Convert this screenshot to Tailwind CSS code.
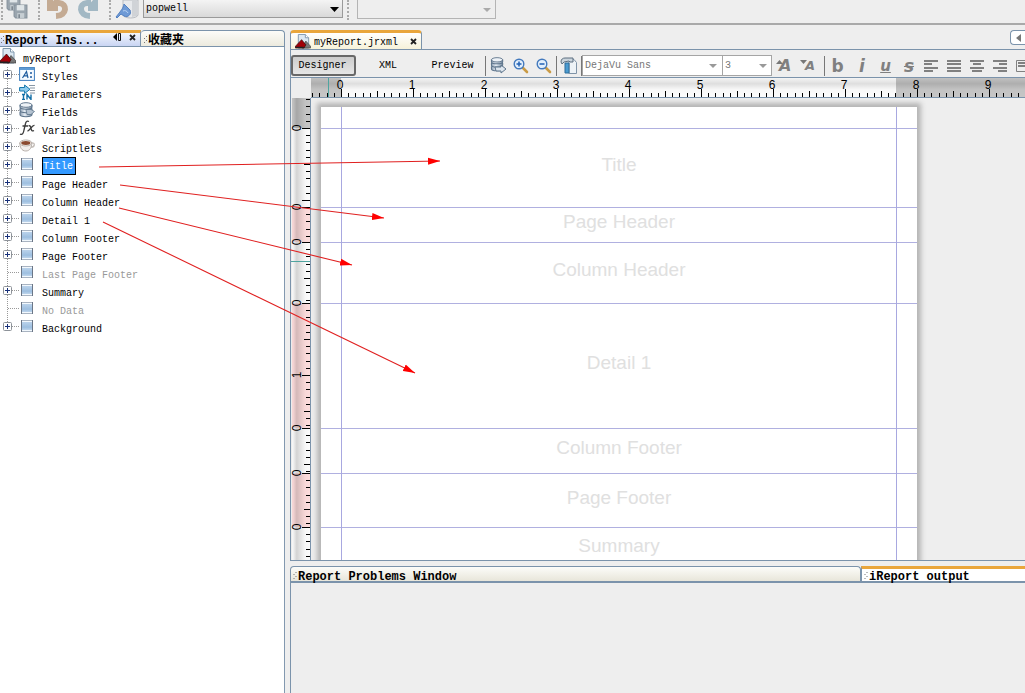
<!DOCTYPE html>
<html lang="en">
<head>
<meta charset="utf-8">
<title>iReport Designer</title>
<script src="https://cdn.jsdelivr.net/npm/@tailwindcss/browser@4"></script>
</head>
<body class="relative flex h-screen flex-col overflow-hidden bg-[#eeeeee] font-['Liberation_Mono','Noto_Sans_CJK_SC',monospace] text-[10px] leading-[18px] text-black">

<svg width="0" height="0" class="absolute" aria-hidden="true">
  <defs>
    <linearGradient id="blue" x1="0" y1="0" x2="0" y2="1"><stop offset="0" stop-color="#c6daef"/><stop offset=".6" stop-color="#9dbfe0"/><stop offset="1" stop-color="#d5e4f4"/></linearGradient>
    <linearGradient id="steel" x1="0" y1="0" x2="1" y2="0"><stop offset="0" stop-color="#8b9db1"/><stop offset=".4" stop-color="#e6edf4"/><stop offset="1" stop-color="#7389a0"/></linearGradient>
    <linearGradient id="rulerH" x1="0" y1="0" x2="0" y2="1"><stop offset="0" stop-color="#000" stop-opacity=".03"/><stop offset=".3" stop-color="#000" stop-opacity=".12"/><stop offset=".6" stop-color="#000" stop-opacity=".02"/><stop offset="1" stop-color="#000" stop-opacity="0"/></linearGradient>
    <marker id="head" markerUnits="userSpaceOnUse" markerWidth="13" markerHeight="8" refX="12" refY="4" orient="auto"><path d="M0 0.5 12 4 0 7.5z" fill="#f00"/></marker>
    <symbol id="doc" viewBox="0 0 16 16"><path d="M3 .5h7.500L14 4v11H3z" fill="#dce8f2" stroke="#8098ae"/><path d="M10.500.5V4H14" fill="#fff" stroke="#8098ae"/><path d="M7 15 11 7.500 16 13v2z" fill="#777" stroke="#333" stroke-width=".6"/><path d="M0 13 6.500 6 11 11.500 9 15H0z" fill="#a00008" stroke="#300" stroke-width=".7"/><path d="M0 13.500h8l2 1.500H0z" fill="#222"/></symbol>
    <symbol id="band" viewBox="0 0 16 16"><path d="M2 2h12v12H2z" fill="url(#blue)"/><path d="M3 3.500h10M3 12.500h10" stroke="#f2f8fd"/><path d="M3 2.500h10M3 13.500h10" stroke="#a9b4c2"/><path d="M2.500 2v12M13.500 2v12" stroke="#6b7686"/></symbol>
    <symbol id="plus" viewBox="0 0 9 9"><rect x=".5" y=".5" width="8" height="8" rx="1" fill="#fff" stroke="#8d9299"/><path d="M2 4.500h5M4.500 2v5" stroke="#17307a"/></symbol>
    <symbol id="db" viewBox="0 0 16 16"><path d="M1 3v9.500c0 3 12 3 12 0V3z" fill="url(#steel)"/><ellipse cx="7" cy="3" rx="6" ry="2.300" fill="#edf2f7" stroke="#63788e"/><path d="M1 3v2c0 3 12 3 12 0V3M1 6.500v2c0 3 12 3 12 0v-2M1 10v2.500c0 3 12 3 12 0V10" fill="none" stroke="#5d748b" stroke-width="1.100"/></symbol>
    <symbol id="fields" viewBox="0 0 16 16"><use href="#db" width="16" height="16"/><path d="M7 7.500h5l3.500 2-3.500 3H8z" fill="#b4c2d0" stroke="#60768c" stroke-width=".8"/></symbol>
    <symbol id="styles" viewBox="0 0 16 14"><rect x=".6" y=".6" width="14.800" height="12.800" fill="#f5faff" stroke="#3d7dbd"/><path d="M1 2h14" stroke="#5f9bd4" stroke-width="2"/><path d="M3.500 11 7.500 4.500 9 11M4.800 8.800h3.800" fill="none" stroke="#1c5a9e" stroke-width="1.200"/><path d="M11 6h2M11 10h2" stroke="#1c5a9e" stroke-width="1.500"/></symbol>
    <symbol id="params" viewBox="0 0 16 16"><path d="M10 1.500h6M11 4h5M11 6.500h5M11 9h5" stroke="#8997a5"/><path d="M.6 3.500h5V1L11 5.300 5.600 9.500V7h-5z" fill="#8ecbed" stroke="#1678ad"/><path d="M4.500 10.500v5M3 10.500h3M3 15.500h3M8 15.500v-5l4 5v-5" fill="none" stroke="#1370a8" stroke-width="1.400"/></symbol>
    <symbol id="fx" viewBox="0 0 16 16"><path d="M1 14c2.500 1.500 3.500-1 4-4L6.500 3.500C7 1 8.500.8 10 1.500M3.500 6H9M9.500 6c2-1 2 1 2.500 2.500.7 2.500 1 3 3 2M15.500 5.500c-2-1-5 5.500-7 5.500" fill="none" stroke="#3c3c3c" stroke-width="1.300"/></symbol>
    <symbol id="cup" viewBox="0 0 16 14"><path d="M12 4c5-1 4 5-1 4" fill="none" stroke="#c3bcb7" stroke-width="1.300"/><path d="M.8 4c0 4 1.700 8 6 8s6-4 6-8z" fill="#f2efed" stroke="#b7afa9"/><ellipse cx="6.800" cy="4" rx="6" ry="3" fill="#f8f5f2" stroke="#b7afa9"/><ellipse cx="6.800" cy="4" rx="4.600" ry="1.900" fill="#8a4a30"/></symbol>
    <symbol id="floppy" viewBox="0 0 14 14"><path d="M1 1h12v12H2.500L1 11.500z" fill="#9aa5ae" stroke="#86929c"/><path d="M3.500 1h7v5h-7z" fill="#dfe5e8"/><path d="M4 8.500h6.500V13H4z" fill="#c6ced3"/><path d="M5 9.500h1.500V13H5z" fill="#7b868f"/></symbol>
    <symbol id="lens" viewBox="0 0 16 16"><path d="m9.500 9.500 4.500 4.500" stroke="#c99b46" stroke-width="2.600" stroke-linecap="round"/><circle cx="6" cy="6" r="4.800" fill="#e2effc" stroke="#4379bd" stroke-width="1.400"/></symbol>
    <symbol id="grip" viewBox="0 0 4 8"><path d="M2 0h1v1H2zM0 2h1v1H0zM2 4h1v1H2zM0 6h1v1H0z" fill="#777"/></symbol>
  </defs>
</svg>

<!-- Main toolbar -->
<header class="flex h-[25px] shrink-0 items-start border-b-2 border-[#a9a9a9] pl-px">
  <i class="h-5 border-l-2 border-dotted border-[#aaa]"></i>
  <button class="ml-[3px]" aria-label="Save all"><svg width="23" height="20"><use href="#floppy" x="0" y="-4" width="15" height="15"/><use href="#floppy" x="7" y="4" width="15" height="15"/></svg></button>
  <i class="ml-[9px] h-5 border-l-2 border-dotted border-[#aaa]"></i>
  <button class="ml-[6px]" aria-label="Undo"><svg width="23" height="20" viewBox="0 0 23 20"><path d="M8 3h5c8.500.5 8.500 12.500-3 13" fill="none" stroke="#c4ab94" stroke-width="6"/><path d="M1 0h6l5 6v5H1z" fill="#c4ab94"/></svg></button>
  <button class="ml-[8px]" aria-label="Redo"><svg width="22" height="20" viewBox="0 0 22 20"><path d="M14 3h-4c-8.500.5-8.500 12.500 3 13" fill="none" stroke="#a2b8c4" stroke-width="6"/><path d="M21 0h-5l-5 6v5h10z" fill="#a2b8c4"/></svg></button>
  <i class="ml-[10px] h-5 border-l-2 border-dotted border-[#aaa]"></i>
  <button class="ml-[4px]" aria-label="Data sources"><svg width="25" height="20" viewBox="0 0 25 20"><path d="M8 0v15c1 4 14 4 15 0V0z" fill="#e7e9ec" stroke="#babdc2"/><path d="M17 0h5v16l-5 1z" fill="#d0d3d7"/><path d="M9 4 15 10c2 4-2 8-6 6l-3-2-4 4-1-1 4-5c1-2 3-3 4-8z" fill="#6e9ad6" stroke="#5380c0"/><path d="M8 11c2-1 4 0 5 2" stroke="#b9d3f3" fill="none"/></svg></button>
  <label class="relative ml-[3px] block w-[200px]">
    <select aria-label="Data source" class="block h-[18px] w-full appearance-none border border-t-0 border-[#9a9a9a] bg-linear-to-b from-[#f4f4f4] to-[#d9d9d9] pl-[2px] leading-[17px]"><option>popwell</option></select>
    <svg class="pointer-events-none absolute right-1 top-[7px]" width="9" height="5"><path d="M0 0h9L4.500 5z"/></svg>
  </label>
  <i class="ml-[4px] h-5 border-l-2 border-dotted border-[#aaa]"></i>
  <label class="relative ml-[8px] block w-[139px]">
    <select aria-label="Location" disabled class="block h-[19px] w-full appearance-none border border-t-0 border-[#b4b4b4] bg-[#eeeeee]"><option></option></select>
    <svg class="pointer-events-none absolute right-[5px] top-[8px]" width="8" height="4"><path d="M0 0h8L4 4z" fill="#aaa"/></svg>
  </label>
</header>

<div class="flex min-h-0 flex-1 pt-[5px]">
  <!-- Report inspector -->
  <aside class="flex w-[285px] shrink-0 flex-col">
    <div class="flex h-[17px] border-b border-[#7b93ab]">
      <div class="flex w-[141px] border-r border-t-[3px] border-r-[#7b93ab] border-t-[#e9a63c] bg-linear-to-b from-[#f2f5fc] to-[#c9d5f3] pl-px">
        <svg width="4" height="8" class="mt-[3px]"><use href="#grip"/></svg>
        <span class="flex-1 whitespace-nowrap text-[12px] leading-[16px] font-bold">Report Ins...</span>
        <button class="flex h-3" aria-label="Minimize"><svg width="9" height="9"><path d="M4 0v8L0 4z"/><path d="M5.500.5h2v7h-2z" fill="none" stroke="#111"/></svg></button>
        <button class="mr-[4px] ml-[7px] mt-px flex h-3" aria-label="Close"><svg width="7" height="7"><path d="m1 1 5 5M6 1 1 6" stroke="#222" stroke-width="1.800"/></svg></button>
      </div>
      <div class="flex flex-1 rounded-t-sm border-t border-r border-[#7b93ab] bg-linear-to-b from-[#fcfcf9] to-[#eceade] pl-[3px] text-[12px] leading-[20px] font-bold"><svg width="4" height="8" class="mt-[5px]"><use href="#grip"/></svg>收藏夹</div>
    </div>
    <nav class="flex-1 border-r border-[#8399b0] bg-white pt-[2px]">
      <div class="flex h-[18px] items-center"><svg width="16" height="16" class="mb-[5px]"><use href="#doc"/></svg><span class="ml-[7px] pt-[3px]">myReport</span></div>
      <ul id="tree"></ul>
    </nav>
  </aside>

  <main class="ml-[5px] flex min-w-0 flex-1 flex-col">
    <!-- Editor tabs -->
    <div class="flex h-[20px] shrink-0 items-stretch justify-between border-b border-[#7b93ab]">
      <div class="flex w-[132px] items-center rounded-t-sm border-x border-t-[3px] border-x-[#7b93ab] border-t-[#e9a63c] bg-linear-to-b from-white to-[#f6f2d9] pl-[4px]">
        <svg width="16" height="15"><use href="#doc"/></svg><span class="ml-[3px] flex-1 pt-[4px]">myReport.jrxml</span>
        <button aria-label="Close tab" class="mr-[4px]"><svg width="7" height="7"><path d="m1 1 5 5M6 1 1 6" stroke="#222" stroke-width="1.800"/></svg></button>
      </div>
      <button aria-label="Scroll left" class="flex h-[15px] w-[15px] items-center justify-center rounded-l-sm border border-r-0 border-[#7b93ab] bg-white"><svg width="5" height="8"><path d="M5 0v8L0 4z" fill="#777"/></svg></button>
    </div>

    <div class="flex min-h-0 flex-1 flex-col border-l border-b border-[#7b93ab]">
      <!-- Designer toolbar -->
      <div class="flex h-[28px] shrink-0 items-center overflow-hidden whitespace-nowrap border-b border-[#7b93ab] pt-[4px]">
        <button class="h-[21px] w-[65px] shrink-0 rounded-[3px] border-2 border-[#686868] bg-linear-to-b from-[#ccc] to-[#e6e6e6] pt-px pr-[2px] leading-[16px]">Designer</button>
        <button class="w-[64px] shrink-0 pt-px">XML</button>
        <button class="w-[65px] shrink-0 pt-px">Preview</button>
        <i class="h-5 border-l border-[#777]"></i>
        <button class="ml-[4px] shrink-0" aria-label="Query"><svg width="17" height="17"><use href="#db" width="16" height="15"/><path d="M5 10h6V8l5 4-5 4v-2H6z" fill="#dde5ed" stroke="#5d748b"/></svg></button>
        <button class="ml-[6px] shrink-0" aria-label="Zoom in"><svg width="16" height="16"><use href="#lens"/><path d="M3.500 6h5M6 3.500v5" stroke="#2161b5" stroke-width="1.500"/></svg></button>
        <button class="ml-[7px] shrink-0" aria-label="Zoom out"><svg width="16" height="16"><use href="#lens"/><path d="M3.500 6h5" stroke="#2161b5" stroke-width="1.500"/></svg></button>
        <i class="ml-[4px] h-5 border-l border-[#777]"></i>
        <button class="ml-[3px] shrink-0" aria-label="Format tools"><svg width="17" height="17"><path d="M9 2.500h5l2.500 3v11H9z" fill="#eef3f7" stroke="#8094a8"/><path d="M1 5c0-3 2-4 4-4h8v4h-3L9 4 4 5 2 7z" fill="#cbd5dd" stroke="#5c6f80"/><path d="M5 6h4v10H5z" fill="#4b9bd0" stroke="#2c6d9b"/></svg></button>
        <i class="ml-[4px] h-5 border-l border-[#777]"></i>
        <label class="relative block w-[141px] shrink-0">
          <select aria-label="Font" disabled class="block h-[21px] w-full appearance-none border border-[#a5a5a5] bg-white pl-[2px] text-[#777] opacity-100"><option>DejaVu Sans</option></select>
          <svg class="pointer-events-none absolute right-[6px] top-[9px]" width="8" height="4"><path d="M0 0h8L4 4z" fill="#999"/></svg>
        </label>
        <label class="relative block w-[49px] shrink-0">
          <select aria-label="Font size" disabled class="block h-[21px] w-full appearance-none border border-l-0 border-[#a5a5a5] bg-white pl-[2px] text-[#777] opacity-100"><option>3</option></select>
          <svg class="pointer-events-none absolute right-[5px] top-[9px]" width="8" height="4"><path d="M0 0h8L4 4z" fill="#999"/></svg>
        </label>
        <div class="ml-[4px] flex shrink-0 items-center font-['DejaVu_Sans',sans-serif] font-bold text-[#808080] text-shadow-[1px_1px_1px_#aaa]">
          <button class="relative w-[24px] pl-[3px] text-left text-[16px] italic" aria-label="Increase font">A<svg class="absolute left-0 top-[3px]" width="7" height="4"><path d="M0 4h7L3.500 0z" fill="#777"/></svg></button>
          <button class="relative w-[24px] pl-[5px] text-left text-[13px] italic" aria-label="Decrease font">A<svg class="absolute left-0 top-[3px]" width="7" height="4"><path d="M0 0h7L3.500 4z" fill="#777"/></svg></button>
          <i class="h-5 border-l border-[#777]"></i>
          <button class="w-[25px] text-[17px]">b</button>
          <button class="w-[24px] text-[17px] italic">i</button>
          <button class="w-[23px] text-[15px] italic underline">u</button>
          <button class="w-[24px] text-[17px] italic line-through">s</button>
        </div>
        <div class="ml-[2px] flex shrink-0 gap-[7px] text-[#808080]">
          <button aria-label="Align left"><svg width="16" height="14" stroke="currentColor" stroke-width="2"><path d="M1 2h14M1 5h8M1 9h14M1 12h9"/></svg></button>
          <button aria-label="Justify"><svg width="16" height="14" stroke="currentColor" stroke-width="2"><path d="M1 2h14M1 5h14M1 9h14M1 12h14"/></svg></button>
          <button aria-label="Align center"><svg width="16" height="14" stroke="currentColor" stroke-width="2"><path d="M1 2h14M4 5h8M1 9h14M3 12h10"/></svg></button>
          <button aria-label="Align right"><svg width="16" height="14" stroke="currentColor" stroke-width="2"><path d="M1 2h14M7 5h8M1 9h14M6 12h9"/></svg></button>
          <button aria-label="Align top"><svg width="16" height="14" stroke="currentColor"><path d="M1.500 1.500h14v11h-14z" fill="none"/><path d="M3 4h12M3 7h12" stroke-width="2"/></svg></button>
        </div>
      </div>

      <!-- Horizontal ruler -->
      <div class="ml-[20px] h-[20px] shrink-0 overflow-hidden border-b border-[#7b93ab]">
        <svg id="ruler-x" width="100%" height="19" class="font-['Liberation_Sans',sans-serif] text-[12px]">
          <rect width="100%" height="19" fill="#c6c6c6"/><rect x="30" width="555" height="19" fill="#fcfcfc"/><rect width="100%" height="19" fill="url(#rulerH)"/><path d="M17.500 0v19" stroke="#4fa5a0"/>
        </svg>
      </div>

      <div class="flex min-h-0 flex-1 overflow-hidden">
        <!-- Vertical ruler -->
        <div class="w-[20px] shrink-0 border-r border-[#7b93ab]">
          <svg id="ruler-y" width="19" height="463" class="font-['Liberation_Sans',sans-serif] text-[12px]">
            <defs><linearGradient id="rulerV"><stop offset="0" stop-color="#000" stop-opacity="0"/><stop offset=".12" stop-color="#000" stop-opacity=".04"/><stop offset=".3" stop-color="#000" stop-opacity=".16"/><stop offset=".75" stop-color="#000" stop-opacity=".02"/><stop offset="1" stop-color="#000" stop-opacity="0"/></linearGradient></defs>
          </svg>
        </div>
        <!-- Report page -->
        <div class="pt-[9px] pl-[10px]">
          <div id="page" class="relative flex w-[596px] flex-col bg-white text-center font-['Liberation_Sans',sans-serif] text-[19px] text-[#e0e0e0] shadow-[0_0_5px_4px_#b4b4b4]"></div>
        </div>
      </div>
    </div>

    <!-- Output windows -->
    <section class="mt-[5px] flex h-[127px] shrink-0 flex-col">
      <div class="flex h-[17px] shrink-0 border-b-2 border-[#7b93ab] text-[12px] font-bold whitespace-nowrap">
        <div class="flex h-[15px] w-[571px] rounded-t-sm border border-b-0 border-[#7b93ab] bg-linear-to-b from-[#fcfcf9] to-[#e8e6da] pl-[2px] leading-[21px]"><svg width="5" height="8" class="mt-[5px]"><use href="#grip"/></svg>Report Problems Window</div>
        <div class="flex h-[15px] flex-1 border-t-[3px] border-l border-t-[#e9a63c] border-l-[#7b93ab] bg-white pl-[2px] leading-[17px]"><svg width="5" height="8" class="mt-[3px]"><use href="#grip"/></svg>iReport output</div>
      </div>
      <div class="flex-1 border-l border-[#7b93ab]"></div>
    </section>
  </main>
</div>

<!-- Annotation arrows -->
<svg class="pointer-events-none absolute left-0 top-0" width="460" height="400" stroke="#e02020" stroke-width="1.100" aria-hidden="true">
  <path d="M99 167 440 161" marker-end="url(#head)"/><path d="M120 185 384 218" marker-end="url(#head)"/><path d="M119 208 352 265" marker-end="url(#head)"/><path d="M103 222 415 373" marker-end="url(#head)"/>
</svg>

<script>
  // [label, icon, expandable]
  const nodes = [['Styles','styles',1],['Parameters','params',1],['Fields','fields',1],['Variables','fx',1],['Scriptlets','cup',1],['Title','band',1],['Page Header','band',1],['Column Header','band',1],['Detail 1','band',1],['Column Footer','band',1],['Page Footer','band',1],['Last Page Footer','band',0],['Summary','band',1],['No Data','band',0],['Background','band',1]];
  document.getElementById('tree').innerHTML = nodes.map(([t, icon, open], i) => `
    <li class="flex h-[18px] items-center">
      <svg width="19" height="18" class="shrink-0"><path d="M7.500 0V${i === nodes.length - 1 ? 7 : 18}M8 7.500h11" stroke="#999" stroke-dasharray="1 1"/>${open ? '<use href="#plus" x="3" y="3" width="9" height="9"/>' : ''}</svg>
      <svg width="16" height="16" class="mb-[4px] shrink-0"><use href="#${icon}"/></svg>
      <span class="${t === 'Title' ? 'ml-[7px] h-[18px] border border-black bg-[#3399ff] pr-[2px] text-white leading-[18px]' : open ? 'ml-[7px] pt-[3px]' : 'ml-[7px] pt-[3px] text-[#999]'}">${t}</span>
    </li>`).join('');

  // Rulers: 72 px per inch, ten ticks each
  let h = '';
  for (let i = -4; i < 100; i++) {
    const x = Math.round(30 + i * 7.2), len = i % 10 === 0 ? 8 : i % 5 === 0 ? 6 : 4;
    h += `<rect x="${x}" y="${19 - len}" width="1" height="${len}"/>`;
    if (i >= 0 && i % 10 === 0) h += `<text x="${x - 1}" y="11" text-anchor="middle">${i / 10}</text>`;
  }
  document.getElementById('ruler-x').insertAdjacentHTML('beforeend', h);

  // [height, ruler fill]
  const bands = [[30,'#c6c6c6'],[79,'#fcfcfc'],[35,'#fddcdc'],[61,'#fcfcfc'],[125,'#fddcdc'],[45,'#fcfcfc'],[54,'#fddcdc'],[40,'#fcfcfc']];
  let y = 0, fills = '', ticks = '';
  bands.forEach(([size, color], b) => {
    fills += `<rect x="1" y="${y}" width="18" height="${size}" fill="${color}"/>`;
    for (let i = 0; i * 7.2 < size; i++) {
      const p = b ? Math.round(y + i * 7.2) : Math.round(30 - i * 7.2);
      const len = i % 10 === 0 ? 8 : i % 5 === 0 ? 6 : 4;
      ticks += `<rect x="${19 - len}" y="${p}" width="${len}" height="1"/>`;
      // A label too near the next band's zero is left out
      if (b && i % 10 === 0 && size - i * 7.2 > 12) ticks += `<text transform="translate(10 ${p}) rotate(-90)" text-anchor="middle">${i / 10}</text>`;
    }
    y += size;
  });
  document.getElementById('ruler-y').insertAdjacentHTML('beforeend', fills + '<rect width="19" height="463" fill="url(#rulerV)"/><path d="M0 163.500h19" stroke="#4fa5a0"/>' + ticks);

  const page = [['',21],['Title',79],['Page Header',35],['Column Header',61],['Detail 1',125],['Column Footer',45],['Page Footer',54],['Summary',42]];
  document.getElementById('page').innerHTML = page.map(([t, size], i) =>
    `<div class="flex items-center justify-center pb-[6px] ${i ? 'border-t border-[#b0b0e0]' : ''}" style="height:${size}px">${t}</div>`).join('') +
    '<i class="absolute inset-y-0 left-[20px] border-l border-[#a8a8e0]"></i><i class="absolute inset-y-0 right-[20px] border-l border-[#a8a8e0]"></i>';
</script>
</body>
</html>
